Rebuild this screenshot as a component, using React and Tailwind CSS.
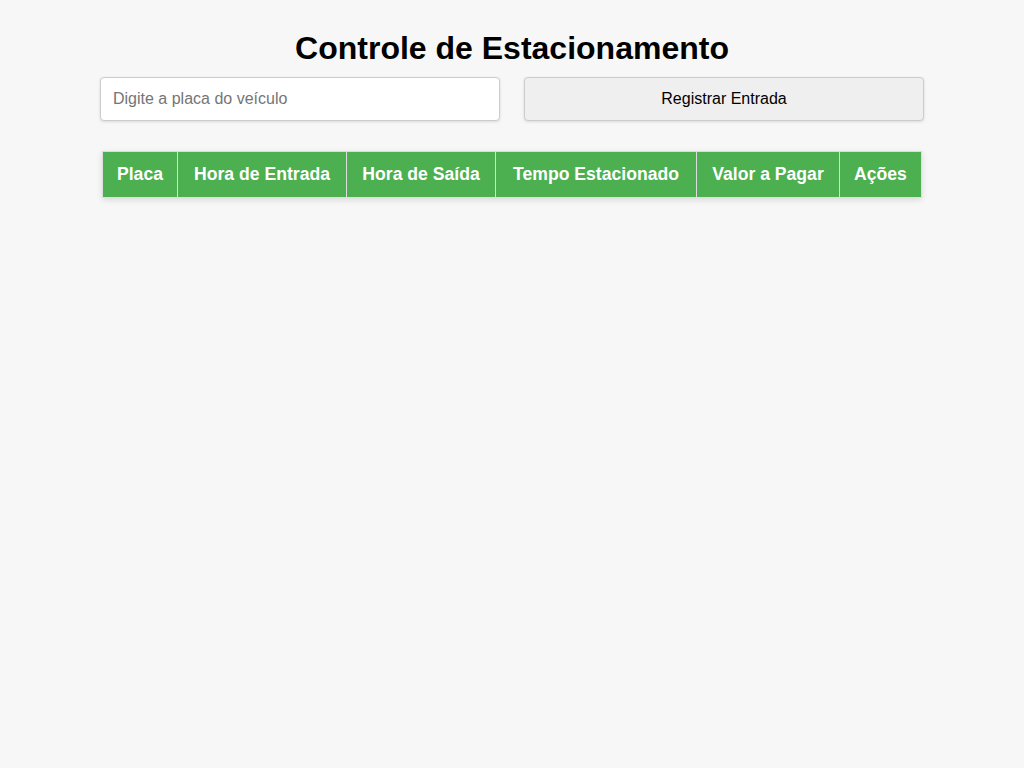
const COLUMNS = [
  { label: "Placa", width: "w-[75px]" },
  { label: "Hora de Entrada", width: "w-[169px]" },
  { label: "Hora de Saída", width: "w-[149px]" },
  { label: "Tempo Estacionado", width: "w-[201px]" },
  { label: "Valor a Pagar", width: "w-[143px]" },
  { label: "Ações", width: "w-[82px]" },
];

export default function App() {
  return (
    <div className="min-h-screen bg-[#f7f7f7] pt-[30px] font-['Liberation_Sans',Arial,sans-serif] text-black">
      <h1 className="text-center text-[32px] font-bold leading-[37px]">Controle de Estacionamento</h1>

      <div className="mx-auto mt-[10px] flex w-[824px] gap-6">
        <input
          type="text"
          placeholder="Digite a placa do veículo"
          className="h-[44px] w-[400px] rounded border border-[#ccc] bg-white px-3 text-base shadow-[0_1px_3px_rgba(0,0,0,0.12)] outline-none placeholder:text-[#757575]"
        />
        <button
          type="button"
          className="h-[44px] w-[400px] rounded border border-[#ccc] bg-[#efefef] text-base text-black shadow-[0_1px_3px_rgba(0,0,0,0.12)]"
        >
          Registrar Entrada
        </button>
      </div>

      <table className="mx-auto mt-[30px] w-[819px] table-fixed border-collapse shadow-[0_2px_6px_rgba(0,0,0,0.12)]">
        <thead>
          <tr className="bg-[#4caf50] text-white">
            {COLUMNS.map((col) => (
              <th
                key={col.label}
                className={`${col.width} border border-[#ddd] py-3 text-center text-[17.6px] font-bold leading-[21px]`}
              >
                {col.label}
              </th>
            ))}
          </tr>
        </thead>
        <tbody></tbody>
      </table>
    </div>
  );
}
